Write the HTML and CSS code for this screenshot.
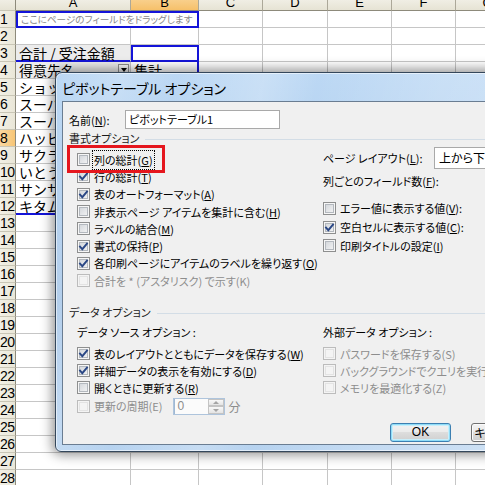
FILE: index.html
```html
<!DOCTYPE html>
<html lang="ja">
<head>
<meta charset="utf-8">
<title>ピボットテーブル オプション</title>
<link rel="stylesheet" href="styles.css">
</head>
<body>
<div class="sheet">
  <div class="row hdr"><b></b><i>A</i><i class="sel">B</i><i>C</i><i>D</i><i>E</i><i>F</i><i>G</i></div>
  <div class="row"><b>1</b><i class="page">ここにページのフィールドをドラッグします</i><i></i><i></i><i></i><i></i><i></i></div>
  <div class="row"><b>2</b><i></i><i></i><i></i><i></i><i></i><i></i><i></i></div>
  <div class="row"><b>3</b><i class="fld b-bot">合計 / 受注金額</i><i class="b-box"></i><i></i><i></i><i></i><i></i><i></i></div>
  <div class="row"><b>4</b><i class="fld drop">得意先名<span class="dd"></span></i><i class="b-r">集計</i><i></i><i></i><i></i><i></i><i></i></div>
  <div class="row"><b>5</b><i>ショップ山田</i><i class="b-r"></i><i></i><i></i><i></i><i></i><i></i></div>
  <div class="row"><b>6</b><i>スーパー中村</i><i class="b-r"></i><i></i><i></i><i></i><i></i><i></i></div>
  <div class="row"><b>7</b><i>スーパー丸正</i><i class="b-r"></i><i></i><i></i><i></i><i></i><i></i></div>
  <div class="row"><b class="sel">8</b><i>ハッピー商会</i><i class="b-r"></i><i></i><i></i><i></i><i></i><i></i></div>
  <div class="row"><b>9</b><i>サクラ商店</i><i class="b-r"></i><i></i><i></i><i></i><i></i><i></i></div>
  <div class="row"><b>10</b><i>いとう書店</i><i class="b-r"></i><i></i><i></i><i></i><i></i><i></i></div>
  <div class="row"><b>11</b><i>サンサン商事</i><i class="b-r"></i><i></i><i></i><i></i><i></i><i></i></div>
  <div class="row"><b>12</b><i class="b-bot">キタムラ商店</i><i class="b-rb"></i><i></i><i></i><i></i><i></i><i></i></div>
  <div class="row"><b>13</b><i></i><i></i><i></i><i></i><i></i><i></i><i></i></div>
  <div class="row"><b>14</b><i></i><i></i><i></i><i></i><i></i><i></i><i></i></div>
  <div class="row"><b>15</b><i></i><i></i><i></i><i></i><i></i><i></i><i></i></div>
  <div class="row"><b>16</b><i></i><i></i><i></i><i></i><i></i><i></i><i></i></div>
  <div class="row"><b>17</b><i></i><i></i><i></i><i></i><i></i><i></i><i></i></div>
  <div class="row"><b>18</b><i></i><i></i><i></i><i></i><i></i><i></i><i></i></div>
  <div class="row"><b>19</b><i></i><i></i><i></i><i></i><i></i><i></i><i></i></div>
  <div class="row"><b>20</b><i></i><i></i><i></i><i></i><i></i><i></i><i></i></div>
  <div class="row"><b>21</b><i></i><i></i><i></i><i></i><i></i><i></i><i></i></div>
  <div class="row"><b>22</b><i></i><i></i><i></i><i></i><i></i><i></i><i></i></div>
  <div class="row"><b>23</b><i></i><i></i><i></i><i></i><i></i><i></i><i></i></div>
  <div class="row"><b>24</b><i></i><i></i><i></i><i></i><i></i><i></i><i></i></div>
  <div class="row"><b>25</b><i></i><i></i><i></i><i></i><i></i><i></i><i></i></div>
  <div class="row"><b>26</b><i></i><i></i><i></i><i></i><i></i><i></i><i></i></div>
  <div class="row"><b>27</b><i></i><i></i><i></i><i></i><i></i><i></i><i></i></div>
  <div class="row"><b>28</b><i></i><i></i><i></i><i></i><i></i><i></i><i></i></div>
</div>

<div class="dialog">
  <div class="titlebar">ピボットテーブル オプション</div>
  <div class="client">
    <div class="namerow">
      <span class="namelabel">名前(<u>N</u>):</span>
      <span class="textbox">ピボットテーブル1</span>
    </div>

    <div class="sec">書式オプション</div>
    <div class="opts">
      <div class="list">
        <div class="cbrow"><span class="cb"></span><span class="focus">列の総計(<u>G</u>)</span></div>
        <div class="cbrow"><span class="cb on"><svg viewBox="0 0 11 11"><path d="M2 5.6 L4.3 8.2 L9 2.6"/></svg></span><span>行の総計(<u>T</u>)</span></div>
        <div class="cbrow"><span class="cb on"><svg viewBox="0 0 11 11"><path d="M2 5.6 L4.3 8.2 L9 2.6"/></svg></span><span>表のオートフォーマット(<u>A</u>)</span></div>
        <div class="cbrow"><span class="cb"></span><span>非表示ページ アイテムを集計に含む(<u>H</u>)</span></div>
        <div class="cbrow"><span class="cb"></span><span>ラベルの結合(<u>M</u>)</span></div>
        <div class="cbrow"><span class="cb on"><svg viewBox="0 0 11 11"><path d="M2 5.6 L4.3 8.2 L9 2.6"/></svg></span><span>書式の保持(<u>P</u>)</span></div>
        <div class="cbrow"><span class="cb on"><svg viewBox="0 0 11 11"><path d="M2 5.6 L4.3 8.2 L9 2.6"/></svg></span><span>各印刷ページにアイテムのラベルを繰り返す(<u>O</u>)</span></div>
        <div class="cbrow dis"><span class="cb"></span><span>合計を * (アスタリスク) で示す(K)</span></div>
      </div>
      <div class="rcol">
        <div class="layoutrow"><span class="rlabel">ページ レイアウト(<u>L</u>):</span><span class="select">上から下</span></div>
        <div class="fieldsrow">列ごとのフィールド数(<u>F</u>):</div>
        <div class="rlist">
          <div class="cbrow tall"><span class="cb"></span><span>エラー値に表示する値(<u>V</u>):</span></div>
          <div class="cbrow tall"><span class="cb on"><svg viewBox="0 0 11 11"><path d="M2 5.6 L4.3 8.2 L9 2.6"/></svg></span><span>空白セルに表示する値(<u>C</u>):</span></div>
          <div class="cbrow tall"><span class="cb"></span><span>印刷タイトルの設定(<u>I</u>)</span></div>
        </div>
      </div>
    </div>

    <div class="sec data">データ オプション</div>
    <div class="dopts">
      <div class="dcol">
        <div class="dlabel">データ ソース オプション :</div>
        <div class="dlist">
          <div class="cbrow d"><span class="cb on"><svg viewBox="0 0 11 11"><path d="M2 5.6 L4.3 8.2 L9 2.6"/></svg></span><span>表のレイアウトとともにデータを保存する(<u>W</u>)</span></div>
          <div class="cbrow d"><span class="cb on"><svg viewBox="0 0 11 11"><path d="M2 5.6 L4.3 8.2 L9 2.6"/></svg></span><span>詳細データの表示を有効にする(<u>D</u>)</span></div>
          <div class="cbrow d"><span class="cb"></span><span>開くときに更新する(<u>R</u>)</span></div>
          <div class="cbrow spinrow dis"><span class="cb"></span><span>更新の周期(E)</span>
            <span class="spin"><span class="val">0</span><span class="arrows"><span class="up"></span><span class="down"></span></span></span>
            <span class="unit">分</span>
          </div>
        </div>
      </div>
      <div class="dcol">
        <div class="dlabel">外部データ オプション :</div>
        <div class="dlist">
          <div class="cbrow d dis"><span class="cb"></span><span>パスワードを保存する(S)</span></div>
          <div class="cbrow d dis"><span class="cb"></span><span>バックグラウンドでクエリを実行する</span></div>
          <div class="cbrow d dis"><span class="cb"></span><span>メモリを最適化する(Z)</span></div>
        </div>
      </div>
    </div>

    <div class="buttons">
      <span class="btn default">OK</span>
      <span class="btn">キャンセル</span>
    </div>
  </div>
</div>

<div class="redbox"></div>
</body>
</html>
```

FILE: styles.css
```css
html, body {
  margin: 0;
  padding: 0;
  width: 485px;
  height: 485px;
  overflow: hidden;
  background: #fff;
}
body {
  position: relative;
  font-family: "Noto Sans CJK JP", "Liberation Sans", sans-serif;
}

/* ---------- spreadsheet ---------- */
.sheet {
  margin-top: -8px;
}
.row {
  display: grid;
  grid-template-columns: 16px 115px 68px 64px 65px 64px 64px 64px;
  height: 17px;
}
.row > * {
  box-sizing: border-box;
  border-right: 1px solid #c6c6c6;
  border-bottom: 1px solid #c6c6c6;
  font-style: normal;
  font-weight: normal;
  font-size: 14px;
  line-height: 16px;
  padding-left: 3px;
  white-space: nowrap;
  overflow: hidden;
  color: #000;
}
.row > b {
  background: linear-gradient(90deg, #f2f0e6, #e9e6d7);
  border-right-color: #8d8a7b;
  border-bottom-color: #c9c6b6;
  font-family: "Liberation Sans Narrow", "Liberation Sans", sans-serif;
  font-size: 14px;
  padding-left: 0;
  text-align: left;
  letter-spacing: -0.5px;
}
.row > b.sel {
  background: linear-gradient(90deg, #fbd9a0, #f7c575);
}
.hdr {
  height: 19px;
}
.hdr > * {
  background: linear-gradient(#f8f7f1, #e6e3d4);
  border-right-color: #aca899;
  border-bottom-color: #8d8a7b;
  text-align: center;
  font-family: "Liberation Sans", sans-serif;
  font-size: 13px;
  line-height: 17px;
  padding: 2px 0 0;
}
.hdr > b {
  background: linear-gradient(#f8f7f1, #e6e3d4);
}
.hdr > .sel {
  background: linear-gradient(#fbdca6, #f6c06a);
}

.page {
  grid-column: span 2;
  font-size: 9.6px !important;
  color: #8a8a8a !important;
  padding-left: 5px !important;
  font-feature-settings: "palt" 1;
  border-right-color: #1414d8 !important;
  border-bottom-color: #1414d8 !important;
  box-shadow: inset 2px 2px 0 #1414d8, inset -1px -1px 0 #1414d8;
}
.fld {
  background: #ececec;
}
.drop {
  display: flex;
  align-items: center;
  justify-content: space-between;
  padding-right: 1px;
}
.dd {
  width: 11px;
  height: 13px;
  box-sizing: border-box;
  border: 1px solid #8e8e8e;
  background: linear-gradient(#fbfbfb, #d9d9d9);
  display: flex;
  align-items: center;
  justify-content: center;
}
.dd::before {
  content: "";
  border-left: 3px solid transparent;
  border-right: 3px solid transparent;
  border-top: 4px solid #000;
}
.b-bot {
  border-bottom-color: #1414d8 !important;
  box-shadow: inset 0 -1px 0 #1414d8;
}
.b-r {
  border-right-color: #1414d8 !important;
  box-shadow: inset -1px 0 0 #1414d8;
}
.b-rb {
  border-right-color: #1414d8 !important;
  border-bottom-color: #1414d8 !important;
  box-shadow: inset -1px -1px 0 #1414d8;
}
.b-box {
  border-right-color: #1414d8 !important;
  border-bottom-color: #1414d8 !important;
  box-shadow: inset 2px 2px 0 #1414d8, inset -1px -1px 0 #1414d8;
}

/* ---------- dialog window ---------- */
.dialog {
  position: absolute;
  left: 55px;
  top: 72px;
  width: 470px;
  padding: 0 6px 6px;
  border: 1px solid #34475b;
  border-radius: 7px 7px 6px 6px;
  background:
    linear-gradient(100deg,
      rgba(255,255,255,0) 0%, rgba(255,255,255,.18) 12%, rgba(255,255,255,0) 22%,
      rgba(255,255,255,.22) 38%, rgba(255,255,255,0) 48%, rgba(255,255,255,.2) 70%, rgba(255,255,255,.35) 100%),
    linear-gradient(#bcd8f4, #a9c8e9 60%, #b7d3f0);
  box-shadow: inset 0 0 0 1px rgba(255,255,255,.55), 0 0 12px 3px rgba(0,0,0,.42);
  font-family: "Noto Sans CJK JP", "Liberation Sans", sans-serif;
  font-feature-settings: "palt" 1;
  font-size: 11px;
  color: #000;
  z-index: 2;
}
.titlebar {
  height: 28px;
  box-sizing: border-box;
  padding: 3px 0 0 0;
  font-size: 14px;
  line-height: 24px;
  color: #000;
  white-space: nowrap;
}
.client {
  background: #f0f0f0;
  border: 1px solid #6a7d92;
  height: 344px;
  box-sizing: border-box;
  padding: 8px 0 0 6px;
  overflow: hidden;
}
u {
  text-decoration: underline;
  text-underline-offset: 1px;
}

.namerow {
  display: flex;
  align-items: center;
  height: 19px;
}
.namelabel {
  width: 56px;
  white-space: nowrap;
}
.textbox {
  width: 155px;
  height: 19px;
  box-sizing: border-box;
  border: 1px solid #a9a9a9;
  background: #fff;
  padding-left: 3px;
  line-height: 17px;
  white-space: nowrap;
}

.sec {
  display: flex;
  align-items: center;
  height: 14px;
  margin-top: 2px;
  line-height: 14px;
  color: #1a1a1a;
  white-space: nowrap;
}
.sec::after {
  content: "";
  flex: 1;
  border-top: 1px solid #d3dde6;
  margin: 2px 0 0 6px;
}
.sec.data {
  margin-top: 16px;
}

.opts {
  display: grid;
  grid-template-columns: 246px 1fr;
  margin-left: 8px;
}
.list {
  padding-top: 6px;
}
.cbrow {
  display: flex;
  align-items: center;
  gap: 4px;
  height: 17.3px;
  white-space: nowrap;
}
.cbrow.tall {
  height: 18.7px;
}
.cbrow.d {
  height: 17px;
}
.dis {
  color: #8d8d8d;
}
.focus {
  outline: 1px dotted #000;
  outline-offset: 1px;
}

.cb {
  flex: none;
  width: 13px;
  height: 13px;
  box-sizing: border-box;
  border: 1px solid #8e8f8f;
  background: linear-gradient(135deg, #cdd1d6, #f8f8f8);
  box-shadow: inset 0 0 0 1px #f6f6f6, inset 0 0 0 2px #b3b8be;
  display: flex;
  align-items: center;
  justify-content: center;
}
.cb svg {
  width: 11px;
  height: 11px;
  display: block;
}
.cb path {
  fill: none;
  stroke: #2a4785;
  stroke-width: 1.9;
  stroke-linecap: square;
}
.dis .cb {
  border-color: #bcbcbc;
  background: #f4f4f4;
  box-shadow: inset 0 0 0 1px #f4f4f4, inset 0 0 0 2px #e3e3e3;
}

.rcol {
  padding-top: 2px;
}
.layoutrow {
  display: flex;
  align-items: center;
  height: 22px;
  white-space: nowrap;
}
.rlabel {
  width: 111px;
}
.select {
  width: 100px;
  height: 22px;
  box-sizing: border-box;
  border: 1px solid #a9a9a9;
  background: #fff;
  padding-left: 4px;
  line-height: 20px;
  font-size: 12px;
}
.fieldsrow {
  height: 24px;
  line-height: 24px;
  white-space: nowrap;
}
.rlist {
  margin-top: 6px;
}

.dopts {
  display: grid;
  grid-template-columns: 246px 1fr;
  margin-left: 8px;
  margin-top: 6px;
}
.dlabel {
  height: 14px;
  line-height: 14px;
  white-space: nowrap;
}
.dlist {
  margin-top: 6px;
}
.spinrow {
  height: 20px;
}
.spin {
  display: flex;
  width: 52px;
  height: 17px;
  box-sizing: border-box;
  border: 1px solid #aec4dc;
  background: #fbfbfb;
  margin-left: 6px;
}
.val {
  flex: 1;
  color: #8d8d8d;
  padding-left: 3px;
  line-height: 15px;
  font-family: "Liberation Sans", sans-serif;
  font-size: 12px;
  border-left: 1px solid #9fb8d3;
}
.arrows {
  width: 16px;
  display: flex;
  flex-direction: column;
}
.arrows span {
  flex: 1;
  box-sizing: border-box;
  border: 1px solid #c4c4c4;
  background: linear-gradient(#f8f8f8, #e4e4e4);
  display: flex;
  align-items: center;
  justify-content: center;
}
.arrows .up::before {
  content: "";
  border-left: 3px solid transparent;
  border-right: 3px solid transparent;
  border-bottom: 3px solid #a4a4a4;
}
.arrows .down::before {
  content: "";
  border-left: 3px solid transparent;
  border-right: 3px solid transparent;
  border-top: 3px solid #a4a4a4;
}
.unit {
  margin-left: 0;
  font-size: 12px;
}

.buttons {
  display: flex;
  gap: 20px;
  margin: 7px 0 0 321px;
}
.btn {
  flex: none;
  width: 61px;
  height: 19px;
  box-sizing: border-box;
  border: 1px solid #707070;
  border-radius: 3px;
  background: linear-gradient(#f2f2f2 0%, #ebebeb 45%, #dddddd 50%, #cfcfcf 100%);
  box-shadow: inset 0 0 0 1px #fbfbfb;
  text-align: center;
  line-height: 17px;
  white-space: nowrap;
  font-size: 12px;
}
.btn.default {
  border-color: #3c7fb1;
  box-shadow: inset 0 0 0 1px #8fdcf7, inset 0 0 0 2px #c8eefb;
  font-family: "Liberation Sans", sans-serif;
}

/* annotation */
.redbox {
  position: absolute;
  left: 67px;
  top: 145px;
  width: 98px;
  height: 28px;
  box-sizing: border-box;
  border: 3px solid #e5161d;
  z-index: 5;
}
```
